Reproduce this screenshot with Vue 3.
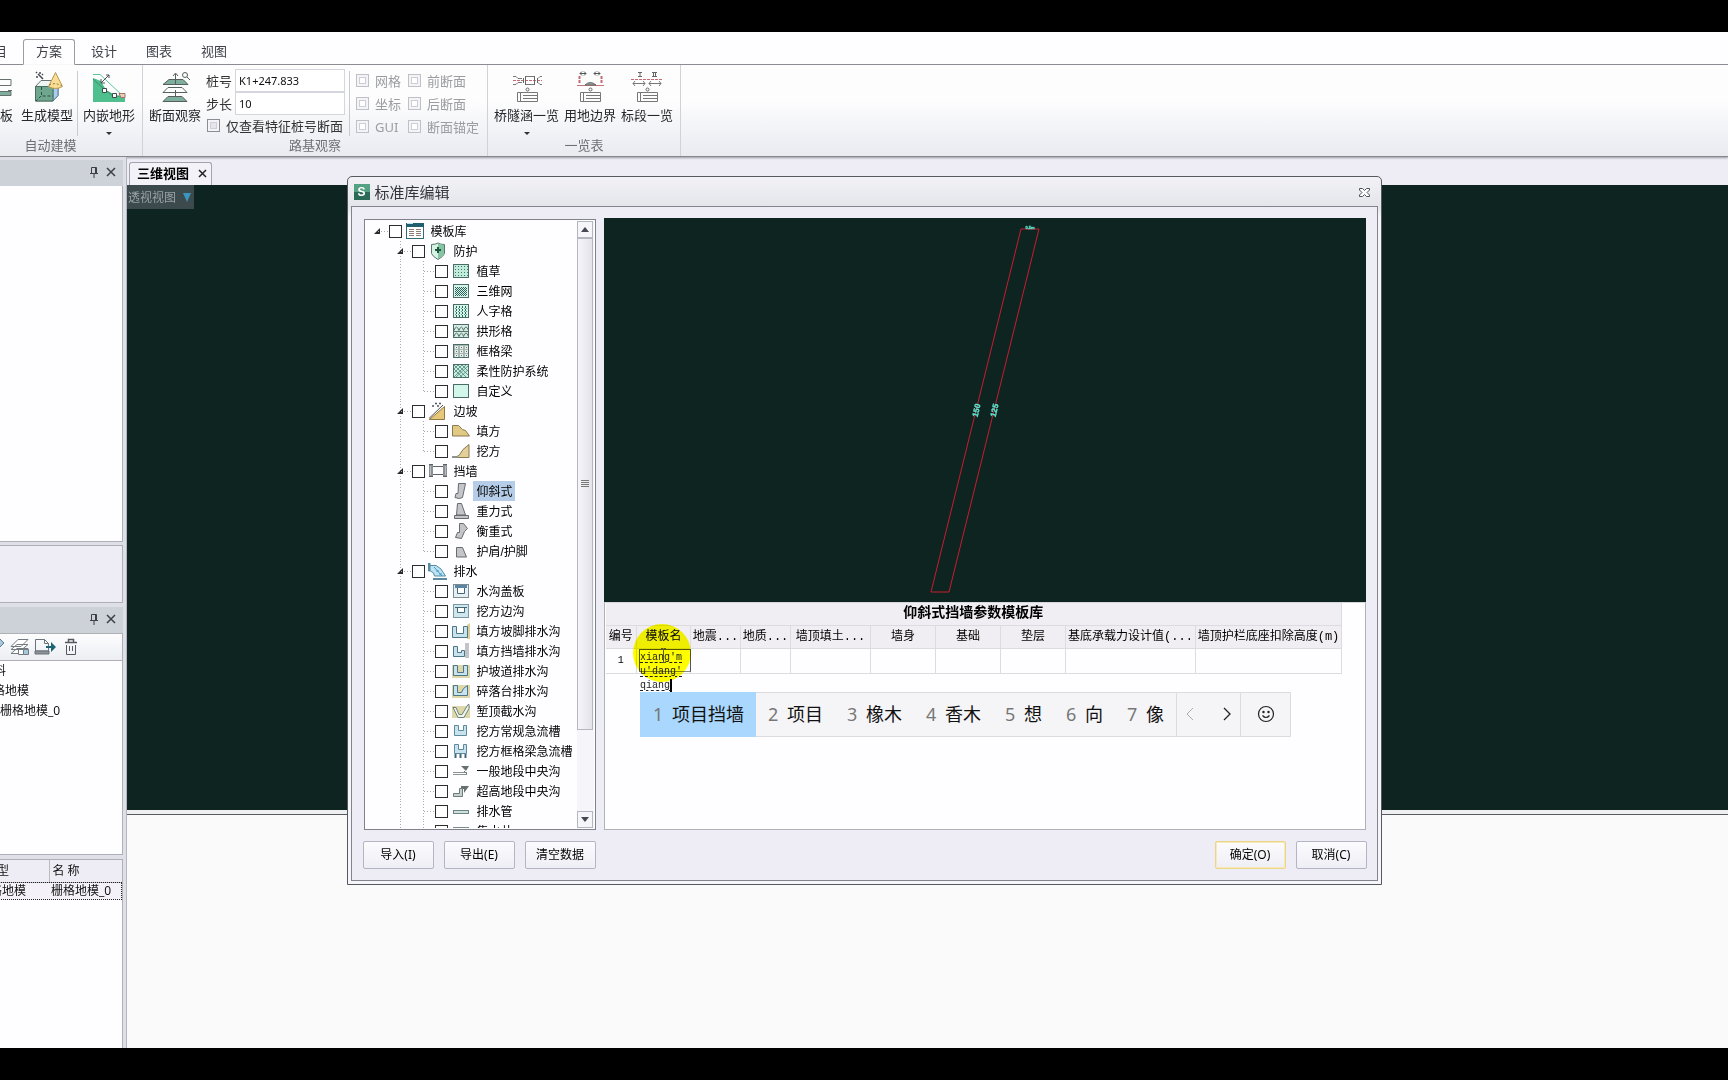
<script setup>
import { ref } from 'vue'

const tabs = ['项目', '方案', '设计', '图表', '视图']
const station = ref('K1+247.833')
const step = ref('10')
const onlyFeature = ref(false)
const displayOptions = ['网格', '前断面', '坐标', '后断面', 'GUI', '断面锚定']

const box = (fill, inner) =>
  `<rect x="2.5" y="2.5" width="15" height="13" fill="${fill}" stroke="#4b6b66"/>${inner}`

const grid = (xs, ys, w, h, color) =>
  xs.flatMap(x => ys.map(y => `<rect x="${x}" y="${y}" width="${w}" height="${h}" fill="${color}"/>`)).join('')

const icons = {
  library:
    '<rect x="1.500" y="1.500" width="17" height="15" fill="#fff" stroke="#2f6b7d"/><path d="M1 1h18v4H1z" fill="#1f5f70"/><path d="M2 1h6v1H2z" fill="#bfe3ea"/><path d="M4 7.500h5M4 9.500h5M4 11.500h5M4 13.500h5M11 7.500h5M11 9.500h5M11 11.500h5M11 13.500h5" stroke="#8a7d74"/>',
  shield:
    '<path d="M3.500 2.500q4 0 6.500-1.500 2.500 1.500 6.500 1.500v9q-1 3-6.500 6-5.500-3-6.500-6z" fill="#d6f2e3" stroke="#5b746d"/><path d="M10 1.500q2.500 1 6 1.500v8.500q-1 2.500-6 5.500z" fill="#84c6a1"/><path d="M10 5v6M7 8h6" stroke="#1f5440" stroke-width="2"/>',
  grass: box('#c3eadb', grid([4, 7, 10, 13, 16], [4, 7, 10, 13], 1, 1, '#2f8068')),
  net: box('#d5f5e8', grid([4, 6, 8, 10, 12, 14], [5, 7, 9, 11, 13], 1, 1, '#2b5f58') + grid([5, 7, 9, 11, 13, 15], [6, 8, 10, 12], 1, 1, '#2b5f58')),
  herring: box('#d5f5e8', grid([5, 8, 11, 14], [4, 7, 10, 13], 1, 2, '#2b6a5c') + grid([4, 7, 10, 13, 15], [6, 9, 12], 1, 1, '#5d9a8c')),
  arch: box('#d7ebe3', '<path d="M3 8.500q2.500-7 5 0 2.500-7 4.500 0 2.500-7 5 0M3 14.500q2.500-7 5 0 2.500-7 4.500 0 2.500-7 5 0M3 9.500h14" stroke="#55776f" fill="none"/>'),
  frame: box('#a9b7b2', grid([4, 9, 14], [4, 8, 12], 3, 3, '#e6eeea') + grid([5, 10, 15], [5, 9, 13], 1, 1, '#64706d')),
  flex: box('#c8f0e0', '<path d="M3 7l4-4 10 10M3 11l8-8 6 6M5 15L17 4M9 15l8-7M3 7l8 8M3 3l12 12M3 15L15 3" stroke="#4f8578" fill="none" stroke-width=".8"/>'),
  custom: box('#d2f7ea', ''),
  slope: '<path d="M1.500 17.500L16.500 4.500v13z" fill="#e6c878" stroke="#8f7a45"/><path d="M1 16.500L15 3" stroke="#55514a"/><path d="M4 4h2M7 1.500h2M11 1.500h2M9 4h2" stroke="#4d555c" stroke-width="1.500"/>',
  fill: '<path d="M1.500 3.500h6l4 4 3 1 4 5.500h-17z" fill="#dfc983" stroke="#8b7950"/>',
  cut: '<path d="M3 15.500l5-2 4-6 6-5v13z" fill="#e3cf98" stroke="#8b7950"/><path d="M1 14h6v2H1z" fill="#8d9490"/>',
  wall: '<path d="M1 2h4v13H1zM15 2h4v13h-4z" fill="#8b9095"/><path d="M5 4.500h10M5 12.500h10M1 2.500h4M15 2.500h4M1 14.500h4M15 14.500h4" stroke="#5c6268"/><path d="M2.500 4v9M17.500 4v9" stroke="#b9bdc1"/>',
  lean: '<path d="M7.500 1.500h7l-3 14q-3 2-7.500 0l1-4h2z" fill="#c4c5c9" stroke="#666b70"/>',
  gravity: '<path d="M5.500 13l1-11.500h4l4 11.500z" fill="#c4c5c9" stroke="#666b70"/><path d="M3.500 13.500h14v3h-14z" fill="#c4c5c9" stroke="#666b70"/>',
  balance: '<path d="M8.500 1.500h4l4 5-3 3-3 7-6-1 2-5h2z" fill="#c4c5c9" stroke="#666b70"/>',
  shoulder: '<path d="M5.500 5.500h6l4 9.500h-10z" fill="#c4c5c9" stroke="#666b70"/>',
  water: '<path d="M.500 1v8h2l3 2 1 3h11L13 7 8 3.500H2z" fill="#bfe3f2" stroke="#4f8ca5"/><path d="M1.500 1v8M5 17h14" stroke="#5b8aa0" stroke-width="2"/><path d="M6 5l8 9M8 9h3M11 12h3" stroke="#3f9cc4"/>',
  cover: '<rect x="2.500" y="2.500" width="15" height="13" fill="#e7eef1" stroke="#7a8a92"/><path d="M4 3h12v3H4z" fill="#5a86a3"/><path d="M6.500 6v5.500h7V6" fill="#fff" stroke="#426779"/>',
  ditch: '<rect x="2.500" y="2.500" width="15" height="13" fill="#cfe6ec" stroke="#7a98a2"/><path d="M4 5.500h12M6.500 5.500v5h7v-5" fill="#fff" stroke="#426779"/>',
  footD: '<path d="M16 3l3-2v16h-3z" fill="#dbcf93"/><path d="M1.500 4.500h4v7h7v-7h4v11h-15z" fill="#c9e3ee" stroke="#4b7788"/>',
  wallD: '<path d="M14 1h4v15h-4z" fill="#c2c4c9"/><path d="M2.500 4.500h4v6h4v-2h3v6h-11z" fill="#c9e3ee" stroke="#4b7788"/>',
  berm: '<path d="M1 3h18v13H1z" fill="#ddd7a9"/><path d="M2.500 3.500h4v7h6v-7h4v10h-14z" fill="#c9e3ee" stroke="#4b7788"/>',
  rock: '<path d="M1 3h18v13H1z" fill="#ddd7a9"/><path d="M2.500 3.500h4v7h4l2-4 4-3v10h-14z" fill="#c9e3ee" stroke="#4b7788"/>',
  top: '<path d="M1 4h18v12H1z" fill="#ddd7a9"/><path d="M2 5.500h3l3 7h3l6-10h1v4l-5 9H7z" fill="#eef3ec" stroke="#6a8378"/>',
  chute: '<path d="M3.500 3.500h4v5h5v-5h3v10h-12z" fill="#c9e3ee" stroke="#5a8a9c"/>',
  chuteF: '<path d="M3.500 2.500h4v5h5v-5h3v9h-12z" fill="#c9e3ee" stroke="#5a8a9c"/><path d="M4.500 12v4M9.500 12v4M14.500 12v4" stroke="#426779" stroke-width="2"/>',
  mid: '<path d="M10 4h8l-3 5-2-2z" fill="#66706f"/><path d="M2 10.500h14M2 12.500h14" stroke="#8a9592"/><path d="M13 9l3 3" stroke="#66706f"/>',
  high: '<path d="M10 4h8l-5 7V7h-3z" fill="#66706f"/><path d="M2.500 11.500h6v-5h3v8h-9z" fill="#c7d2cf" stroke="#6d7a77"/>',
  pipe: '<rect x="2.500" y="8.500" width="15" height="3" fill="#cfe0df" stroke="#6c8583"/>',
  well: '<path d="M2.500 5v10M2 5.500h16M17.500 5v10M7.500 5v6M12.500 5v6" stroke="#7c8a88" fill="none"/>'
}

const tree = [
  [0, 'library', '模板库'],
  [1, 'shield', '防护'],
  [2, 'grass', '植草'],
  [2, 'net', '三维网'],
  [2, 'herring', '人字格'],
  [2, 'arch', '拱形格'],
  [2, 'frame', '框格梁'],
  [2, 'flex', '柔性防护系统'],
  [2, 'custom', '自定义'],
  [1, 'slope', '边坡'],
  [2, 'fill', '填方'],
  [2, 'cut', '挖方'],
  [1, 'wall', '挡墙'],
  [2, 'lean', '仰斜式'],
  [2, 'gravity', '重力式'],
  [2, 'balance', '衡重式'],
  [2, 'shoulder', '护肩/护脚'],
  [1, 'water', '排水'],
  [2, 'cover', '水沟盖板'],
  [2, 'ditch', '挖方边沟'],
  [2, 'footD', '填方坡脚排水沟'],
  [2, 'wallD', '填方挡墙排水沟'],
  [2, 'berm', '护坡道排水沟'],
  [2, 'rock', '碎落台排水沟'],
  [2, 'top', '堑顶截水沟'],
  [2, 'chute', '挖方常规急流槽'],
  [2, 'chuteF', '挖方框格梁急流槽'],
  [2, 'mid', '一般地段中央沟'],
  [2, 'high', '超高地段中央沟'],
  [2, 'pipe', '排水管'],
  [2, 'well', '集水井']
].map(([level, icon, label], i, all) => ({
  level, icon, label, id: 'node' + i,
  last: level === 2 && !!all[i + 1] && all[i + 1][0] < 2
}))
const selected = ref('仰斜式')

const columns = [
  ['编号', 31], ['模板名', 54], ['地震...', 50], ['地质...', 50], ['墙顶填土...', 80],
  ['墙身', 65], ['基础', 65], ['垫层', 65], ['基底承载力设计值(...', 130], ['墙顶护栏底座扣除高度(m)', 146]
]
const composing = ref("xiang'm\nu'dang'\nqiang")
const candidates = ['项目挡墙', '项目', '橡木', '香木', '想', '向', '像']
</script>

<template>
  <div class="screen">
    <div class="band"></div>
    <div class="app">
      <nav class="tabs">
        <button v-for="t in tabs" :key="t" class="tab" :class="{ active: t === '方案' }">{{ t }}</button>
      </nav>

      <section class="ribbon">
        <div class="group g-model">
          <div class="tools">
            <button class="tool">
              <svg width="32" height="32" viewBox="0 0 32 32" fill="none" stroke="#66716f"><path d="M6 8.500h21v6H6zM24 19.500h4" /><path d="M6 20.500h21v4H6z" fill="#7fb09c" /></svg>
              <span>模板</span>
            </button>
            <button class="tool">
              <svg width="32" height="32" viewBox="0 0 32 32" fill="none">
                <path d="M4.500 15.500L10 9.500h17v15l-5 5.500H4.500z" fill="#eef4f2" stroke="#6a7573" />
                <path d="M22 15.500l5-6v15l-5 5.500z" fill="#a9cdf0" stroke="#5b7d9c" />
                <path d="M4.500 15.500H22V30H4.500z" fill="#6ea78e" stroke="#4c6e62" />
                <path d="M10.500 16v9H22M10 25l-5 5" stroke="#2f4f45" stroke-dasharray="3 2" />
                <path d="M24.500 1.500l7 14q-7 4-14 0z" fill="#f9dd93" stroke="#b99a55" />
                <path d="M18 14q6-3 13 1" stroke="#8d7545" stroke-dasharray="2 2" />
                <path d="M7 3l5 5M5 6h2M9 1v2M12 3l-1 1M5 1l1 1" stroke="#45494f" stroke-width="1.500" />
              </svg>
              <span>生成模型</span>
            </button>
            <i class="rule"></i>
            <button class="tool">
              <svg width="34" height="32" viewBox="0 0 34 32" fill="none">
                <path d="M1 7l8 3 5 9 11 6h8v6H1z" fill="#4fc08d" />
                <path d="M1 3.500h7L31 25" stroke="#5cc79b" />
                <path d="M1 8l10 9M11 17l10 8M21 25h12" stroke="#3a8d6b" />
                <path d="M27 22.500h6v4h-4z" fill="#e9cdbf" stroke="#a0755f" />
                <path d="M9 12l8-8M9 12V8M9 12h4M17 4v3M17 4h-3" stroke="#4a5257" />
                <path d="M10.500 17.500h4v4h-4zM20.500 22.500h4v4h-4z" fill="#fff" stroke="#3b4a46" />
              </svg>
              <span>内嵌地形</span><b class="caret"></b>
            </button>
          </div>
          <div class="caption">自动建模</div>
        </div>

        <div class="group g-road">
          <div class="tools">
            <button class="tool">
              <svg width="32" height="32" viewBox="0 0 32 32" fill="none" stroke="#54605e">
                <path d="M10 8.500h14l5 5H4z" fill="#7fae9c" /><path d="M9 16.500h14l5 5H4z" fill="#fff" /><path d="M9 25.500h14l5 5H4z" fill="#7fae9c" />
                <path d="M16.500 3v11M16.500 19v6M14 5l2.500-3L19 5" /><circle cx="26" cy="4" r="2.500" /><path d="M28 6l3 3" />
              </svg>
              <span>断面观察</span>
            </button>
            <div class="fields">
              <label class="field">桩号<input v-model="station" type="text" /></label>
              <label class="field">步长<input v-model="step" type="text" /></label>
              <label class="check strong"><input v-model="onlyFeature" type="checkbox" />仅查看特征桩号断面</label>
            </div>
            <i class="rule"></i>
            <div class="options">
              <label v-for="o in displayOptions" :key="o" class="check"><input type="checkbox" disabled />{{ o }}</label>
            </div>
          </div>
          <div class="caption">路基观察</div>
        </div>

        <div class="group g-list">
          <div class="tools">
            <button class="tool">
              <svg width="32" height="32" viewBox="0 0 32 32" fill="none">
                <path d="M2 5.500h3l2 2h4M2 13.500h3l2-2h4M31 5.500h-2l-2 2M31 13.500h-2l-2-2M15 5.500h8M15 13.500h8" stroke="#777" /><path d="M2 9.500h29" stroke="#c76a75" stroke-dasharray="3 1" /><path d="M14.500 5v9M23.500 5v9M12.500 7v5M26.500 7v5" stroke="#666" />
                <circle cx="16.500" cy="18.500" r="1.500" stroke="#666" /><path d="M6.500 21.500h20v9h-20zM9.500 21.500v9M12 24.500h14M12 27.500h14" stroke="#777" />
              </svg>
              <span>桥隧涵一览</span><b class="caret"></b>
            </button>
            <button class="tool">
              <svg width="32" height="32" viewBox="0 0 32 32" fill="none">
                <path d="M6 2.500h6M20 2.500h6M8 .500l-2 2 2 2M10 .500l2 2-2 2M22 .500l-2 2 2 2M24 .500l2 2-2 2" stroke="#555" /><path d="M5.500 5v8M27.500 5v8" stroke="#c76a75" stroke-width="2" stroke-dasharray="3 1" /><path d="M3 14.500h27" stroke="#c4737c" /><path d="M11 14q5-5 11 0z" fill="#8fa59d" stroke="#666" />
                <circle cx="16.500" cy="18.500" r="1.500" stroke="#666" /><path d="M6.500 21.500h20v9h-20zM9.500 21.500v9M12 24.500h14M12 27.500h14" stroke="#777" />
              </svg>
              <span>用地边界</span>
            </button>
            <button class="tool">
              <svg width="34" height="32" viewBox="0 0 34 32" fill="none">
                <path d="M8 1.500h4M10 1.500v4M8 5.500h4M22 1.500h5M23.500 1.500v4M25.500 1.500v4M22 5.500h5" stroke="#666" /><path d="M1 8.500h32" stroke="#c76a75" stroke-dasharray="3 1" /><path d="M3 12.500h12M19 12.500h12M5 10l-2 2.500L5 15M13 10l2 2.500-2 2.500M21 10l-2 2.500 2 2.500M29 10l2 2.500-2 2.500" stroke="#777" />
                <circle cx="17.500" cy="18.500" r="1.500" stroke="#666" /><path d="M7.500 21.500h20v9h-20zM10.500 21.500v9M13 24.500h14M13 27.500h14" stroke="#777" />
              </svg>
              <span>标段一览</span>
            </button>
          </div>
          <div class="caption">一览表</div>
        </div>
      </section>

      <main class="work">
        <aside class="side">
          <header class="dock-title">
            <svg width="10" height="12" viewBox="0 0 10 12" fill="none" stroke="#3c3f46"><path d="M2.500 1.500h5v6M2.500 1.500v6M1 7.500h8M5 8v4M6.500 1.500v6" /></svg>
            <svg width="10" height="10" viewBox="0 0 10 10" stroke="#3c3f46" stroke-width="1.500"><path d="M1 1l8 8M9 1L1 9" /></svg>
          </header>
          <div class="sheet grow"></div>
          <div class="note"></div>
          <header class="dock-title">
            <svg width="10" height="12" viewBox="0 0 10 12" fill="none" stroke="#3c3f46"><path d="M2.500 1.500h5v6M2.500 1.500v6M1 7.500h8M5 8v4M6.500 1.500v6" /></svg>
            <svg width="10" height="10" viewBox="0 0 10 10" stroke="#3c3f46" stroke-width="1.500"><path d="M1 1l8 8M9 1L1 9" /></svg>
          </header>
          <div class="icon-bar">
            <svg width="6" height="18" viewBox="0 0 6 18" fill="#a6c8dc" stroke="#5f7a88"><path d="M-4 3l4-2 4 4-5 5z" /></svg>
            <svg width="20" height="18" viewBox="0 0 20 18" fill="#fff" stroke="#737b80"><path d="M1 15.500l6-5h11l-5 5zM1 11.500l6-5h11l-6 5zM1 8.500l7-7h10l-7 7z" /><path d="M8.500 11.500h5v5h-5z" /><path d="M13.500 11.500h5v5h-5z" fill="#a6c8dc" /></svg>
            <svg width="22" height="18" viewBox="0 0 22 18" fill="none" stroke="#6b7378"><path d="M1.500 1.500h9l4 4V13h-13zM10.500 1.500v4h4" /><path d="M1 13h14v3H1z" fill="#8b9398" /><path d="M12 8h5V4l5 5-5 5v-4h-5z" fill="#1f6475" stroke="none" /></svg>
            <svg width="14" height="18" viewBox="0 0 14 18" fill="none" stroke="#55585c"><path d="M1 4.500h12M4.500 4V1.500h5V4" stroke-width="1.500" /><path d="M2.500 7v9.500h9V7M5.500 8v5M8.500 8v5" /></svg>
          </div>
          <ul class="sheet layers">
            <li class="l-data">资料</li>
            <li class="l-group">栅格地模</li>
            <li>栅格地模_0</li>
          </ul>
          <div class="sheet props">
            <table>
              <thead><tr><th>类型</th><th>名 称</th></tr></thead>
              <tbody><tr><td>栅格地模</td><td>栅格地模_0</td></tr></tbody>
            </table>
          </div>
        </aside>

        <section class="document">
          <div class="doc-tabs">
            <button class="doc-tab">三维视图
              <svg width="9" height="9" viewBox="0 0 9 9" stroke="#222" stroke-width="1.500"><path d="M1 1l7 7M8 1L1 8" /></svg>
            </button>
          </div>
          <div class="canvas"><button class="view-mode">透视视图<b></b></button></div>
          <div class="console"></div>
        </section>
      </main>

      <div class="overlay">
        <section class="dialog" role="dialog" aria-labelledby="dlg-title">
          <header class="dlg-head">
            <span class="logo">S</span>
            <h1 id="dlg-title">标准库编辑</h1>
            <button class="dlg-close" aria-label="关闭">
              <svg width="13" height="11" viewBox="0 0 13 11" fill="#fff" stroke="#50535c"><path d="M1.500 1.500h3l2 2 2-2h3v1.500L9 5.500 11.500 8v1.500h-3l-2-2-2 2h-3V8L4 5.500 1.500 3z" /></svg>
            </button>
          </header>
          <div class="dlg-body">
            <div class="panes">
              <div class="tree-pane">
                <ul class="tree">
                  <li v-for="n in tree" :key="n.id" class="node">
                    <span v-for="c in n.level + 1" :key="c" class="cell"
                      :class="{ v: c > 1, h: c === n.level + 1, half: c === n.level + 1 && n.last }">
                      <svg v-if="c === n.level + 1 && n.level < 2" width="7" height="7" viewBox="0 0 7 7"><path d="M6 0v6H0z" fill="#2a2a2a" /></svg>
                    </span>
                    <input :id="n.id" type="checkbox" />
                    <svg class="ico" width="20" height="18" viewBox="0 0 20 18" fill="none" v-html="icons[n.icon]"></svg>
                    <label :for="n.id" :class="{ on: n.label === selected }">{{ n.label }}</label>
                  </li>
                </ul>
                <div class="scroll">
                  <button class="s-btn" aria-label="向上"><i class="up"></i></button>
                  <div class="thumb"><i></i></div>
                  <button class="s-btn end" aria-label="向下"><i class="down"></i></button>
                </div>
              </div>

              <div class="detail">
                <svg class="preview" viewBox="0 0 762 384">
                  <path d="M417 11h18l-90 363h-18z" fill="none" stroke="#c81c30" />
                  <g fill="#5fe6cf" stroke="#5fe6cf" stroke-width=".3" font-family="Liberation Sans, sans-serif" font-weight="bold" text-anchor="middle">
                    <text x="426" y="11" font-size="4">0.5m</text>
                    <text transform="translate(375 193) rotate(-76)" font-size="8">150</text>
                    <text transform="translate(393 193) rotate(-76)" font-size="8">125</text>
                  </g>
                </svg>
                <div class="grid">
                  <table>
                    <colgroup><col v-for="c in columns" :key="c[0]" :style="{ width: c[1] + 'px' }" /></colgroup>
                    <thead>
                      <tr class="t-title"><th colspan="10">仰斜式挡墙参数模板库</th></tr>
                      <tr><th v-for="c in columns" :key="c[0]">{{ c[0] }}</th></tr>
                    </thead>
                    <tbody>
                      <tr>
                        <td>1</td>
                        <td class="edit">
                          <div class="edit-box"></div>
                          <i class="spot"></i>
                          <textarea v-model="composing" rows="3" aria-label="模板名" spellcheck="false"></textarea>
                          <i class="text-caret"></i>
                          <svg class="ibeam" width="7" height="15" viewBox="0 0 7 15" fill="none" stroke="#555a2a"><path d="M1 .500h2l.500 1 .500-1h2M3.500 1v13M1 14.500h5" /></svg>
                          <div class="ime">
                            <button v-for="(c, i) in candidates" :key="c" class="cand" :class="{ first: i === 0 }"><span>{{ i + 1 }}</span>{{ c }}</button>
                            <div class="pager">
                              <button aria-label="上一页"><svg width="8" height="14" viewBox="0 0 8 14" fill="none" stroke="#aaa"><path d="M7 1L1 7l6 6" /></svg></button>
                              <button aria-label="下一页"><svg width="8" height="14" viewBox="0 0 8 14" fill="none" stroke="#222" stroke-width="1.300"><path d="M1 1l6 6-6 6" /></svg></button>
                            </div>
                            <button class="smile" aria-label="表情"><svg width="18" height="18" viewBox="0 0 18 18" fill="none" stroke="#222" stroke-width="1.200"><circle cx="9" cy="9" r="7.500" /><path d="M5.500 10.500q3.500 4 7 0" /><circle cx="6.500" cy="7" r=".6" fill="#222" /><circle cx="11.500" cy="7" r=".6" fill="#222" /></svg></button>
                          </div>
                        </td>
                        <td v-for="k in 8" :key="k"></td>
                      </tr>
                    </tbody>
                  </table>
                </div>
              </div>
            </div>
            <footer class="actions">
              <button>导入(I)</button>
              <button>导出(E)</button>
              <button>清空数据</button>
              <button class="ok">确定(O)</button>
              <button>取消(C)</button>
            </footer>
          </div>
        </section>
      </div>
    </div>
    <div class="band"></div>
  </div>
</template>

<style>
body { margin: 0; overflow: hidden; background: #000; }
</style>

<style scoped>
* { box-sizing: border-box; }
button, input, textarea { font: inherit; color: inherit; margin: 0; padding: 0; border: 0; background: none; border-radius: 0; }
ul { list-style: none; margin: 0; padding: 0; }
svg { display: block; flex: none; }
.screen { display: flex; flex-direction: column; height: 100vh; font: 12px/20px "Noto Sans", "Noto Sans CJK SC", sans-serif; color: #111; }
.band { flex: none; height: 32px; background: #000; }
.app { position: relative; flex: 1; min-height: 0; display: flex; flex-direction: column; overflow: hidden; background: #eeecf5; }

.tabs { display: flex; gap: 3px; height: 33px; flex: none; padding-top: 7px; margin-left: -32px; background: #fefdff; border-bottom: 1px solid #8a8c92; font-size: 13px; color: #3f4148; }
.tab { width: 52px; height: 26px; padding-bottom: 2px; border: 1px solid transparent; }
.tab.active { background: #fefdff; border-color: #9a9ca2; border-bottom-color: #fefdff; border-radius: 3px 3px 0 0; }

.ribbon { flex: none; display: flex; height: 92px; background: linear-gradient(#fdfdfe 40%, #f1f2f6 75%, #e9ebf0); border-bottom: 1px solid #85878d; box-shadow: 0 1px 2px #9a9ba3; font-size: 13px; }
.group { display: flex; flex-direction: column; border-right: 1px solid #d0d2d8; overflow: hidden; }
.g-model { width: 143px; }
.g-model .tools { justify-content: flex-end; padding-right: 4px; }
.g-model .caption { padding-right: 41px; }
.g-road { width: 345px; }
.g-list { width: 193px; }
.tools { display: flex; height: 71px; padding-top: 4px; }
.caption { text-align: center; color: #6e7078; line-height: 18px; }
.tool { display: flex; flex-direction: column; align-items: center; flex: none; padding: 2px 3px 0 2px; height: 67px; color: #26282c; }
.g-list .tools { padding-left: 4px; }
.tool span { line-height: 18px; margin-top: 3px; white-space: nowrap; }
.caret { margin-top: 8px; border: 3px solid transparent; border-top-color: #333; border-bottom: 0; }
.rule { flex: none; width: 1px; height: 65px; margin-top: 2px; background: #c9cbd1; }
.g-model .rule { margin-left: 1px; margin-right: 3px; }
.fields { flex: none; display: flex; flex-direction: column; width: 143px; }
.g-road .tool { padding: 2px 5px 0 6px; }
.field { display: flex; align-items: center; gap: 3px; height: 23px; line-height: 22px; white-space: nowrap; color: #333; }
.field input { width: 110px; height: 23px; padding-left: 3px; border: 1px solid #d5d5dd; background: #fff; font-size: 11px; color: #111; }
.check { display: flex; align-items: center; gap: 6px; height: 23px; white-space: nowrap; color: #9c9da2; }
.check.strong { color: #333; padding-left: 1px; }
.check input { appearance: none; flex: none; width: 13px; height: 13px; border: 1px solid #c0c1c7; background: #fff; box-shadow: inset 0 0 0 2px #f4f4f8, inset 0 0 0 3px #cdced6; }
.check.strong input { border-color: #8c8d94; background: #e8e4ee; }
.options { display: grid; grid-template-columns: 52px 72px; grid-template-rows: 23px 23px 23px; padding-left: 6px; }

.work { flex: 1; min-height: 0; display: flex; }
.side { width: 127px; flex: none; display: flex; flex-direction: column; padding: 3px 3px 0 0; background: #dfdfe7; border-right: 1px solid #b4b6c0; overflow: hidden; }
.dock-title { flex: none; display: flex; align-items: center; justify-content: flex-end; gap: 7px; height: 26px; padding: 0 7px 2px 0; background: #cdd1d8; }
.sheet { background: #fefdff; border: 1px solid #aeb0b8; border-left: 0; overflow: hidden; }
.grow { flex: 1; border-top: 0; margin-bottom: 3px; }
.note { flex: none; height: 58px; background: #eeecf5; border: 1px solid #aeb0b8; border-left: 0; margin-bottom: 4px; }
.icon-bar { flex: none; display: flex; align-items: center; height: 28px; gap: 4px; background: linear-gradient(#fdfdfe, #eceef2); border: 1px solid #aeb0b8; border-left: 0; }
.icon-bar svg:last-child { margin-left: 4px; }
.layers { flex: none; height: 194px; border-top: 0; margin-bottom: 4px; white-space: nowrap; }
.l-data { margin-left: -18px; }
.l-group { margin-left: -19px; }
.props { flex: none; height: 189px; border-bottom: 0; }
.props table { width: 144px; margin-left: -22px; border-collapse: collapse; table-layout: fixed; }
.props th { height: 22px; padding: 0 0 0 3px; text-align: left; font-weight: 400; background: #eeecf5; border-bottom: 1px solid #bbb; white-space: pre; }
.props th:first-child { width: 71px; padding-left: 7px; border-right: 1px solid #bbb; }
.props tr { outline-offset: -1px; }
.props tbody tr { outline: 1px dotted #222; }
.props td { height: 18px; padding: 0 0 0 2px; line-height: 16px; background: #f4f1f8; white-space: nowrap; }
.props td:first-child { padding-left: 0; }

.document { flex: 1; min-width: 0; display: flex; flex-direction: column; }
.doc-tabs { flex: none; height: 28px; padding: 5px 0 0 2px; }
.doc-tab { display: flex; align-items: center; gap: 9px; height: 23px; padding: 0 4px 2px 7px; border: 1px solid #a2a4ac; border-bottom: 0; border-radius: 3px 3px 0 0; background: #f4f2f9; font-size: 13px; font-weight: 700; color: #000; }
.canvas { flex: 1; background: #0e2421; }
.view-mode { display: flex; align-items: center; gap: 7px; height: 24px; padding: 1px 3px 0 1px; background: #3c4a4d; color: #98a2a4; }
.view-mode b { border: 4px solid transparent; border-top: 9px solid #3c95bd; border-bottom: 0; }
.console { flex: none; height: 238px; background: #fafafa; border-top: 4px solid #efeff2; box-shadow: inset 0 1px 0 #55585c; }

.overlay { position: absolute; inset: 144px 0 0; display: flex; justify-content: center; align-items: flex-start; }
.dialog { width: 1035px; height: 709px; display: flex; flex-direction: column; padding: 0 3px 3px; background: linear-gradient(#f2f2f6, #e4e5ea 30px, #f6f6fa 40px); border: 1px solid #55585f; border-radius: 5px 5px 0 0; }
.dlg-head { flex: none; display: flex; align-items: center; height: 29px; padding: 1px 6px 0 3px; gap: 5px; }
.logo { width: 16px; height: 16px; background: linear-gradient(#55a184 50%, #2b6a57 50%); color: #fff; font: bold 12px/16px "Liberation Sans", sans-serif; text-align: center; }
h1 { flex: 1; margin: 0; font-size: 15px; font-weight: 400; line-height: 22px; color: #33353b; }
.dlg-close { padding: 0 1px; }
.dlg-body { flex: 1; min-height: 0; display: flex; flex-direction: column; gap: 11px; padding: 12px 11px 11px 12px; background: #eeecf5; border: 1px solid #83858c; }
.panes { flex: 1; min-height: 0; display: flex; gap: 8px; }
.tree-pane { display: flex; width: 232px; flex: none; border: 1px solid #7f828a; padding: 1px; background: #fefdff; font-family: "Liberation Sans", "Noto Sans CJK SC", sans-serif; }
.tree { flex: 1; min-width: 0; overflow: hidden; color: #000; }
.node { display: flex; align-items: center; height: 20px; white-space: nowrap; }
.cell { position: relative; flex: none; width: 23px; height: 20px; display: flex; align-items: center; justify-content: center; }
.cell.v { background: repeating-linear-gradient(#aaa 0 1px, transparent 1px 3px) 11px 0 / 1px 100% no-repeat; }
.cell.v.half { background-size: 1px 10px; }
.cell.h::after { content: ""; position: absolute; left: 12px; right: 1px; top: 10px; height: 1px; background: repeating-linear-gradient(90deg, #aaa 0 1px, transparent 1px 3px); }
.cell svg { position: relative; }
.node input { appearance: none; flex: none; width: 13px; height: 13px; border: 1px solid #2c2c2c; background: #fff; margin-right: 3px; }
.ico { margin-right: 2px; }
.node label { height: 20px; line-height: 22px; padding: 0 2px 0 4px; }
.node label.on { background: #b5cde9; }
.scroll { flex: none; width: 17px; display: flex; flex-direction: column; background: #f6f5fa; padding-right: 1px; }
.s-btn { flex: none; height: 17px; display: flex; align-items: center; justify-content: center; border: 1px solid #b5b7c0; background: #f5f5fa; }
.s-btn.end { margin-top: auto; }
.up { border: 4px solid transparent; border-bottom: 5px solid #444852; border-top: 0; }
.down { border: 4px solid transparent; border-top: 5px solid #444852; border-bottom: 0; }
.thumb { flex: 0 0 81%; display: flex; align-items: center; justify-content: center; background: linear-gradient(90deg, #f5f5f9, #e3e3ea); border: 1px solid #b5b7c0; }
.thumb i { width: 8px; height: 7px; background: repeating-linear-gradient(#777 0 1px, transparent 1px 2px); }

.detail { flex: 1; min-width: 0; display: flex; flex-direction: column; margin-top: -1px; }
.preview { width: 100%; height: 384px; background: #0e2421; }
.grid { flex: 1; min-height: 0; background: #fefdff; border: 1px solid #b0b2ba; border-top-color: #d8d8dc; }
.grid table { border-collapse: collapse; table-layout: fixed; width: 736px; margin-left: 1px; font-family: "Liberation Mono", "Noto Sans CJK SC", monospace; color: #000; }
.grid th, .grid td { padding: 0; border: 1px solid #dcdbe0; border-top: 0; border-left: 0; text-align: center; white-space: nowrap; overflow: hidden; }
.grid th { height: 23px; line-height: 22px; background: #f0eef2; font-weight: 400; }
.grid .t-title th { height: 22px; font-size: 14px; line-height: 21px; font-weight: 700; }
.grid td { height: 25px; font-size: 10px; line-height: 22px; }
.grid td.edit { position: relative; overflow: visible; }
.edit-box { width: 52px; height: 23px; margin-left: 2px; border: 1px solid #555; border-bottom-color: #888; }
.spot { position: absolute; left: -4px; top: -25px; width: 58px; height: 58px; border-radius: 50%; background: #ff0; mix-blend-mode: darken; opacity: 1; }
.edit textarea { position: absolute; left: 3px; top: 2px; width: 50px; height: 43px; font: 10px/14px "Liberation Mono", monospace; color: #222; resize: none; overflow: hidden; text-decoration: underline dashed #222; text-underline-offset: 2px; outline: none; }
.text-caret { position: absolute; left: 33px; top: 30px; width: 2px; height: 14px; background: #000; }
.ibeam { position: absolute; left: 23px; top: -1px; }
.ime { position: absolute; left: 3px; top: 43px; display: flex; height: 45px; background: #f5f5f7; border: 1px solid #dcdce0; border-left: 0; font: 18px/42px "Noto Sans", "Noto Sans CJK SC", sans-serif; color: #111; }
.cand { flex: none; display: flex; padding: 0 12px; }
.cand span { width: 19px; text-align: left; color: #777; }
.cand.first { background: #a9d7fd; margin: -1px 0; padding: 1px 12px 0 13px; }
.pager { flex: none; display: flex; align-items: center; gap: 29px; padding: 0 9px; border-left: 1px solid #dcdce0; border-right: 1px solid #dcdce0; }
.smile { width: 49px; display: flex; align-items: center; justify-content: center; }

.actions { flex: none; display: flex; gap: 10px; margin: 0 -1px; }
.actions button { width: 71px; height: 28px; border: 1px solid #b3b5c4; border-radius: 2px; background: linear-gradient(#fcfcfe, #eeeef5); color: #000; }
.actions .ok { margin-left: auto; border-color: #ecd588; box-shadow: inset 0 0 0 1px #f7eab8; }
</style>
